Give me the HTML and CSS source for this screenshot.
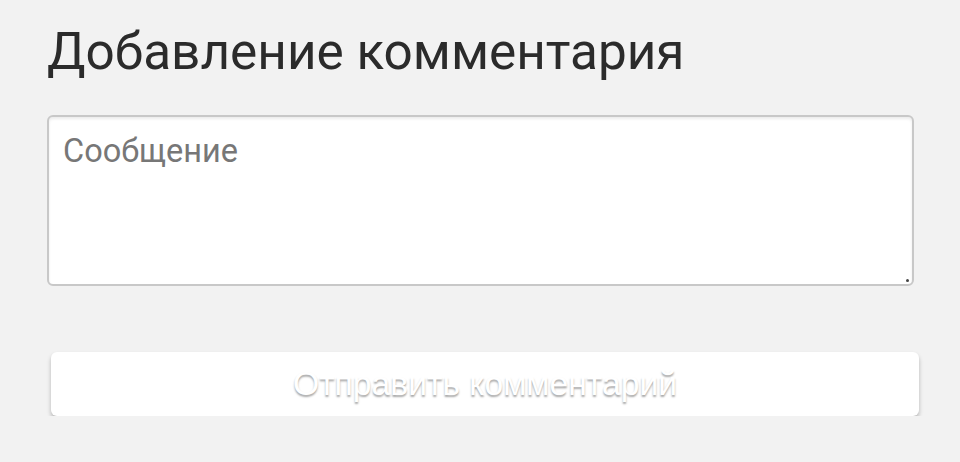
FILE: index.html
```html
<!DOCTYPE html>
<html lang="ru">
<head>
<meta charset="utf-8">
<link rel="stylesheet" href="styles.css">
</head>
<body>
<div class="page">
  <h1 class="title">Добавление комментария</h1>
  <div class="field">
    <textarea class="message" placeholder="Сообщение"></textarea>
    <span class="grip"></span>
  </div>
  <button class="submit" type="button">Отправить комментарий</button>
</div>
</body>
</html>
```
FILE: styles.css
```css
html, body {
  margin: 0;
  padding: 0;
  background: #f2f2f2;
}
.page {
  display: flex;
  flex-direction: column;
  align-items: flex-start;
  padding: 21px 41px 0 47px;
}
.title {
  margin: 0;
  font-family: Roboto, sans-serif;
  font-weight: 400;
  font-size: 51.3px;
  line-height: 61px;
  color: #2b2b2b;
}
.field {
  position: relative;
  margin-top: 33px;
  width: 867px;
  height: 171px;
}
.message {
  display: block;
  box-sizing: border-box;
  width: 100%;
  height: 100%;
  margin: 0;
  padding: 15px 14px;
  border: 2px solid #c8c8c8;
  border-radius: 6px;
  background: #fff;
  box-shadow: inset 0 2px 3px rgba(0,0,0,0.08);
  font-family: Roboto, sans-serif;
  font-size: 32.5px;
  color: #333;
  resize: none;
  outline: none;
}
.message::placeholder {
  color: #777;
}
.grip {
  position: absolute;
  right: 5px;
  bottom: 4px;
  width: 3px;
  height: 3px;
  border-radius: 50%;
  background: #444;
}
.submit {
  box-sizing: border-box;
  margin-top: 66px;
  margin-left: 4px;
  width: 868px;
  height: 64px;
  padding: 0 0 2px;
  border: none;
  border-radius: 6px;
  background: #fff;
  box-shadow: 0 3px 4px rgba(0,0,0,0.25);
  font-family: "Liberation Sans", Arial, sans-serif;
  font-size: 33.7px;
  color: #fff;
  text-shadow: 0 2px 2px rgba(0,0,0,0.35);
}
```
